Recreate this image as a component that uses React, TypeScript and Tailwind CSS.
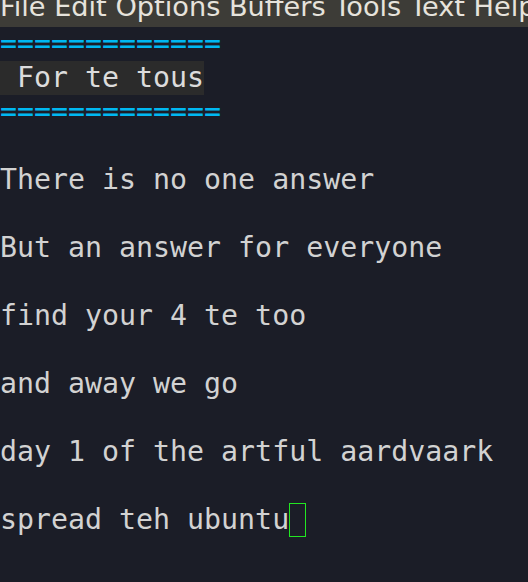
const MENU = ["File", "Edit", "Options", "Buffers", "Tools", "Text", "Help"];

type Line = { text: string; kind?: "rule" | "title" | "cursor" };

const LINES: Line[] = [
  { text: "=============", kind: "rule" },
  { text: " For te tous", kind: "title" },
  { text: "=============", kind: "rule" },
  { text: "" },
  { text: "There is no one answer" },
  { text: "" },
  { text: "But an answer for everyone" },
  { text: "" },
  { text: "find your 4 te too" },
  { text: "" },
  { text: "and away we go" },
  { text: "" },
  { text: "day 1 of the artful aardvaark" },
  { text: "" },
  { text: "spread teh ubuntu", kind: "cursor" },
];

export default function App() {
  return (
    <div className="w-[528px] h-[582px] overflow-hidden bg-[#1b1d27]">
      {/* menu bar */}
      <div className="h-[27px] overflow-hidden bg-[#3d3c37]">
        <div className="whitespace-pre font-['DejaVu_Sans',sans-serif] text-[27.2px] leading-[14px] text-[#e6e3dc]">
          {MENU.join(" ")}
        </div>
      </div>

      {/* buffer */}
      <div className="font-['DejaVu_Sans_Mono',monospace] text-[28.25px] leading-[34px] text-[#d2d2d2] whitespace-pre">
        {LINES.map((line, i) => {
          if (line.kind === "rule") {
            return (
              <div key={i} className="h-[34px] text-[#00b8f2]">
                {line.text}
              </div>
            );
          }
          if (line.kind === "title") {
            return (
              <div key={i} className="h-[34px]">
                <span className="inline-block h-[34px] bg-[#2b2b2b] text-[#dcdcdc]">{line.text}</span>
              </div>
            );
          }
          if (line.kind === "cursor") {
            return (
              <div key={i} className="flex h-[34px]">
                <span>{line.text}</span>
                <span className="w-[17px] h-[34px] border border-[#22e622]" />
              </div>
            );
          }
          return (
            <div key={i} className="h-[34px]">
              {line.text}
            </div>
          );
        })}
      </div>
    </div>
  );
}
